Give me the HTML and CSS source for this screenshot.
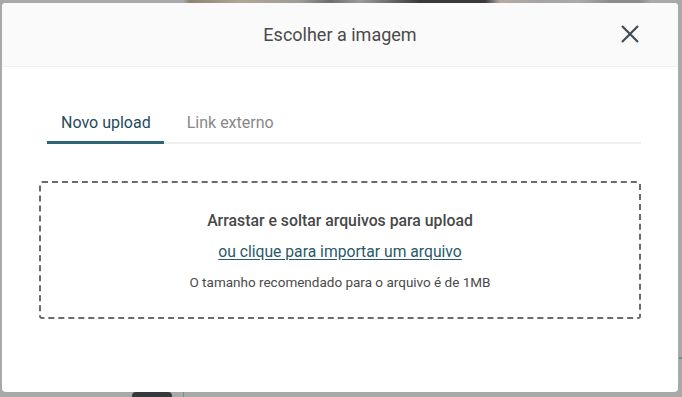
FILE: index.html
```html
<!DOCTYPE html>
<html lang="pt">
<head>
<meta charset="utf-8">
<title>Escolher a imagem</title>
<link rel="stylesheet" href="styles.css">
</head>
<body>
<div class="backdrop">
  <div class="bg-top"></div>
  <div class="bg-bottom"><span class="bg-dark"></span><span class="bg-line"></span></div>
  <div class="bg-mark"></div>
  <div class="dialog" role="dialog">
    <header class="dialog-header">
      <h1 class="dialog-title">Escolher a imagem</h1>
      <button class="close-btn" aria-label="Fechar">
        <svg width="18" height="18" viewBox="0 0 18 18"><path d="M1 1L17 17M17 1L1 17" stroke="#3e4d55" stroke-width="2.2" fill="none"/></svg>
      </button>
    </header>
    <div class="dialog-body">
      <nav class="tabs">
        <span class="tab active">Novo upload</span>
        <span class="tab">Link externo</span>
      </nav>
      <div class="dropzone">
        <p class="drop-title">Arrastar e soltar arquivos para upload</p>
        <a class="drop-link" href="#">ou clique para importar um arquivo</a>
        <p class="drop-hint">O tamanho recomendado para o arquivo é de 1MB</p>
      </div>
    </div>
  </div>
</div>
</body>
</html>
```
FILE: styles.css
```css
* { box-sizing: border-box; }
html, body { margin: 0; padding: 0; }
body {
  width: 682px;
  height: 397px;
  overflow: hidden;
  background: #a9a9a9;
  font-family: Roboto, "Liberation Sans", sans-serif;
}
.backdrop {
  position: relative;
  width: 682px;
  height: 397px;
  padding: 3px 4px 5px 2px;
}
.bg-top {
  position: absolute;
  left: 0; top: 0;
  width: 682px; height: 4px;
  background: linear-gradient(90deg, #a9a9a9 0, #a9a9a9 183px, #8d8475 190px, #b2a594 240px, #9f9b94 300px, #6e6e6e 330px, #9b9b9b 360px, #3a3a3c 420px, #3a3a3c 485px, #b8aaa1 500px, #a7a5a4 540px, #a9a9a9 580px, #8a8c8e 610px, #8a8c8e 640px, #a9a9a9 650px);
}
.bg-bottom {
  position: absolute;
  left: 0; bottom: 0;
  width: 682px; height: 5px;
  display: flex;
}
.bg-dark {
  margin-left: 132px;
  width: 40px; height: 5px;
  background: #35393d;
  border-radius: 4px 4px 0 0;
}
.bg-line {
  margin-left: 11px;
  width: 1px; height: 5px;
  background: #5e9a8c;
}
.bg-mark {
  position: absolute;
  right: 0; top: 357px;
  width: 3px; height: 2px;
  background: #5e9a8c;
}
.dialog {
  position: relative;
  width: 676px;
  height: 389px;
  background: #fff;
  border-radius: 4px;
  overflow: hidden;
  display: flex;
  flex-direction: column;
}
.dialog-header {
  height: 64px;
  flex: none;
  background: #fafafa;
  border-bottom: 1px solid #f0f0f0;
  display: flex;
  align-items: center;
  justify-content: center;
  position: relative;
}
.dialog-title {
  margin: 0;
  font-size: 18px;
  font-weight: 400;
  color: #4a4a4a;
}
.close-btn {
  position: absolute;
  right: 37px;
  top: 20px;
  width: 22px; height: 22px;
  padding: 2px;
  border: 0;
  background: none;
  display: flex;
  align-items: center;
  justify-content: center;
}
.dialog-body {
  padding: 40px 37px 0 37px;
}
.tabs {
  display: flex;
  margin-left: 8px;
  border-bottom: 2px solid #efefef;
}
.tab {
  padding: 6px 13px 9px 14px;
  font-size: 16px;
  line-height: 19px;
  color: #888;
  margin-right: 9px;
  margin-bottom: -2px;
  border-bottom: 3px solid transparent;
}
.tab.active {
  color: #1f4b5a;
  border-bottom-color: #2e6475;
}
.dropzone {
  margin-top: 37px;
  height: 138px;
  border: 2px dashed #6b6b6b;
  border-radius: 3px;
  display: flex;
  flex-direction: column;
  align-items: center;
  padding-top: 28px;
}
.drop-title {
  margin: 0;
  font-size: 15.8px;
  line-height: 19px;
  font-weight: 500;
  color: #484848;
}
.drop-link {
  margin-top: 12px;
  font-size: 15.7px;
  line-height: 19px;
  color: #2a5968;
  text-decoration: underline;
  text-underline-offset: 2px;
}
.drop-hint {
  margin: 13px 0 0;
  font-size: 13.5px;
  line-height: 16px;
  color: #4a4a4a;
}
```
